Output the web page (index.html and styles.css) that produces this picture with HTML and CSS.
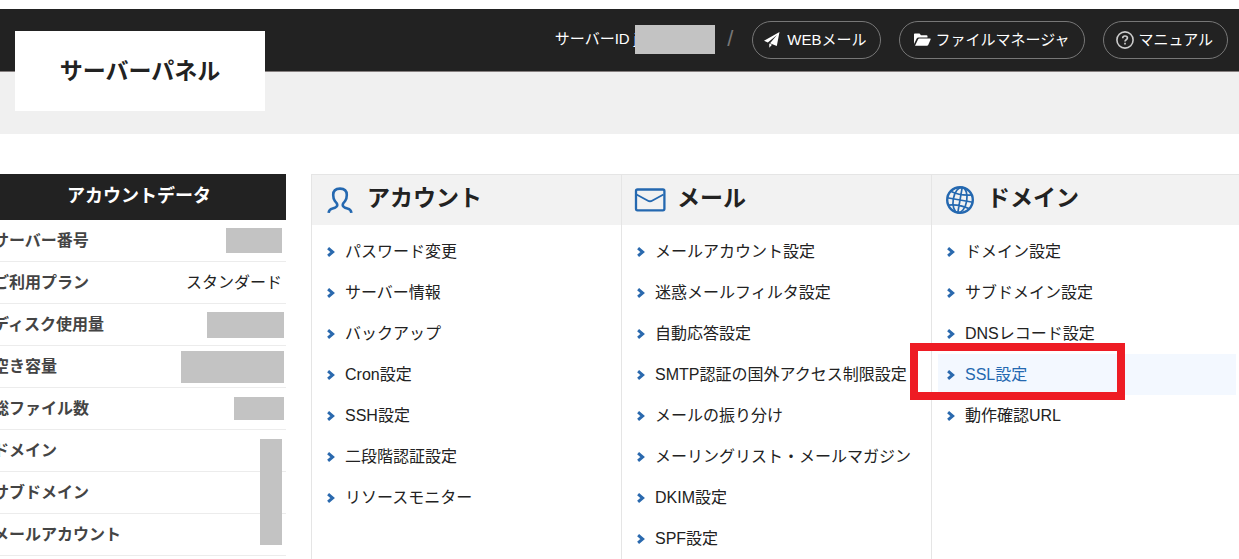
FILE: index.html
```html
<!DOCTYPE html>
<html lang="ja">
<head>
<meta charset="utf-8">
<title>サーバーパネル</title>
<link rel="stylesheet" href="styles.css">
</head>
<body>
<svg class="sprite" width="0" height="0" aria-hidden="true">
  <symbol id="chevron" viewBox="0 0 8 10"><path d="M1.1 1.2 L5.6 5 L1.1 8.8" fill="none" stroke="#2a69ae" stroke-width="3"/></symbol>
</svg>
<header class="header">
  <h1 class="logo">サーバーパネル</h1>
  <nav class="nav">
    <span class="server">サーバーID j<span class="mask mask-id"></span></span>
    <span class="slash">/</span>
    <a class="pill pill-mail" href="#">
      <svg width="16" height="16" viewBox="0 0 16 16"><path d="M15.5 0 L0 8.8 L3.8 10.5 L13 3 L6 11.2 L12.8 14 Z M5.3 11.6 L5.3 15.7 L8 12.8 Z" fill="#fff"/></svg>
      WEBメール</a>
    <a class="pill pill-file" href="#">
      <svg width="17" height="14" viewBox="0 0 17 14"><path d="M0 11 V1.2 Q0 0.5 .8 .5 H5.5 L7 2.2 H12.5 Q13.5 2.2 13.5 3.2 V4.4 H4.6 Q3.3 4.4 2.7 5.5 Z M1 12.8 L4 6.4 Q4.4 5.6 5.3 5.6 H16 Q17 5.6 16.6 6.5 L14.2 12 Q13.8 12.8 13 12.8 Z" fill="#fff"/></svg>
      ファイルマネージャ</a>
    <a class="pill pill-help" href="#">
      <svg width="18" height="18" viewBox="0 0 18 18" fill="none" stroke="#ccc"><circle cx="9" cy="9" r="8.1" stroke-width="1.6"/><path d="M6.7 7.2 Q6.7 5 9 5 Q11.4 5 11.4 7 Q11.4 8 10.2 8.8 Q9 9.6 9 10.6 M9 11.8 V13.4" stroke-width="1.7"/></svg>
      マニュアル</a>
  </nav>
</header>
<div class="subbar"></div>
<main class="main">
  <table class="side">
    <thead><tr><th class="side-title" colspan="2" scope="colgroup">アカウントデータ</th></tr></thead>
    <tbody>
      <tr><th scope="row">サーバー番号</th><td><span class="mask mask-number"></span></td></tr>
      <tr><th scope="row">ご利用プラン</th><td>スタンダード</td></tr>
      <tr><th scope="row">ディスク使用量</th><td class="wide"><span class="mask mask-disk"></span></td></tr>
      <tr><th scope="row">空き容量</th><td class="wide"><span class="mask mask-free"></span></td></tr>
      <tr><th scope="row">総ファイル数</th><td class="wide"><span class="mask mask-files"></span></td></tr>
      <tr><th scope="row">ドメイン</th><td class="counts"><span class="mask mask-counts"></span></td></tr>
      <tr><th scope="row">サブドメイン</th><td></td></tr>
      <tr><th scope="row">メールアカウント</th><td></td></tr>
    </tbody>
  </table>
  <div class="menus">
    <section class="menu">
      <h2>
        <svg width="32" height="32" viewBox="0 0 32 32" fill="none" stroke="#2468b0" stroke-width="2.6"><path d="M4.6 28.8 Q5 25.5 8.5 24.6 Q13.3 23.2 13.3 21 Q13.3 19.5 11 17.2 Q9.2 15 9.2 11 Q9.2 4.6 16 4.6 Q22.8 4.6 22.8 11 Q22.8 15 21 17.2 Q18.7 19.5 18.7 21 Q18.7 23.2 23.5 24.6 Q27 25.5 27.4 28.8"/></svg>
        <span>アカウント</span></h2>
      <ul>
        <li><a href="#"><svg class="arrow"><use href="#chevron"/></svg>パスワード変更</a></li>
        <li><a href="#"><svg class="arrow"><use href="#chevron"/></svg>サーバー情報</a></li>
        <li><a href="#"><svg class="arrow"><use href="#chevron"/></svg>バックアップ</a></li>
        <li><a href="#"><svg class="arrow"><use href="#chevron"/></svg>Cron設定</a></li>
        <li><a href="#"><svg class="arrow"><use href="#chevron"/></svg>SSH設定</a></li>
        <li><a href="#"><svg class="arrow"><use href="#chevron"/></svg>二段階認証設定</a></li>
        <li><a href="#"><svg class="arrow"><use href="#chevron"/></svg>リソースモニター</a></li>
      </ul>
    </section>
    <section class="menu">
      <h2>
        <svg width="32" height="32" viewBox="0 0 32 32" fill="none" stroke="#2468b0"><rect x="2" y="5.5" width="28.4" height="20.8" rx="1.5" stroke-width="2.3"/><path d="M2.5 10.5 L13.5 16.5 Q16 18 18.5 16.5 L29.5 10.5" stroke-width="1.8"/></svg>
        <span>メール</span></h2>
      <ul>
        <li><a href="#"><svg class="arrow"><use href="#chevron"/></svg>メールアカウント設定</a></li>
        <li><a href="#"><svg class="arrow"><use href="#chevron"/></svg>迷惑メールフィルタ設定</a></li>
        <li><a href="#"><svg class="arrow"><use href="#chevron"/></svg>自動応答設定</a></li>
        <li><a href="#"><svg class="arrow"><use href="#chevron"/></svg>SMTP認証の国外アクセス制限設定</a></li>
        <li><a href="#"><svg class="arrow"><use href="#chevron"/></svg>メールの振り分け</a></li>
        <li><a href="#"><svg class="arrow"><use href="#chevron"/></svg>メーリングリスト・メールマガジン</a></li>
        <li><a href="#"><svg class="arrow"><use href="#chevron"/></svg>DKIM設定</a></li>
        <li><a href="#"><svg class="arrow"><use href="#chevron"/></svg>SPF設定</a></li>
      </ul>
    </section>
    <section class="menu">
      <h2>
        <svg width="32" height="32" viewBox="0 0 32 32" fill="none" stroke="#2468b0"><circle cx="16" cy="16" r="12.8" stroke-width="2.4"/><g stroke-width="1.7" transform="rotate(10 16 16)"><ellipse cx="16" cy="16" rx="6.8" ry="12.8"/><path d="M16 3 V29 M3 16 H29 M5.3 9 Q16 12 26.7 9 M5.3 23 Q16 20 26.7 23"/></g></svg>
        <span>ドメイン</span></h2>
      <ul>
        <li><a href="#"><svg class="arrow"><use href="#chevron"/></svg>ドメイン設定</a></li>
        <li><a href="#"><svg class="arrow"><use href="#chevron"/></svg>サブドメイン設定</a></li>
        <li><a href="#"><svg class="arrow"><use href="#chevron"/></svg>DNSレコード設定</a></li>
        <li class="active"><a href="#"><svg class="arrow"><use href="#chevron"/></svg>SSL設定</a><span class="callout"></span></li>
        <li><a href="#"><svg class="arrow"><use href="#chevron"/></svg>動作確認URL</a></li>
      </ul>
    </section>
  </div>
</main>
</body>
</html>
```
FILE: styles.css
```css
* { box-sizing: border-box; }
body {
  margin: 0;
  padding-top: 9px;
  background: #fff;
  color: #222;
  font: 16px/24px "Liberation Sans", "Noto Sans CJK JP", sans-serif;
  overflow: hidden;
}
.sprite { position: absolute; }
a { color: inherit; text-decoration: none; }
.mask { display: inline-block; background: #c3c3c3; vertical-align: middle; }

.header {
  position: relative;
  display: flex;
  justify-content: flex-end;
  height: 63px;
  padding: 12px 11px 0 15px;
  background: #222;
  border-bottom: 1px solid #857f7f;
}
.logo {
  position: absolute;
  left: 15px;
  top: 22px;
  width: 250px;
  margin: 0;
  background: #fff;
  color: #222;
  font-size: 23px;
  line-height: 80px;
  text-align: center;
}
.nav { display: flex; align-items: flex-start; color: #fff; font-size: 15px; white-space: nowrap; }
.server { display: flex; align-items: center; height: 36px; white-space: pre; }
.mask-id { width: 80px; height: 29px; margin-left: -2px; }
.slash { margin: 0 19px 0 12px; color: #777; font-size: 22px; line-height: 36px; }
.pill {
  display: flex;
  align-items: center;
  height: 38px;
  border: 1px solid #777;
  border-radius: 19px;
}
.pill + .pill { margin-left: 18px; }
.pill-mail { gap: 7px; padding: 0 14px 0 11px; }
.pill-file { gap: 4px; padding: 0 15px 0 14px; }
.pill-help { gap: 4px; padding: 0 14px 0 12px; }
.subbar { height: 62px; background: #f0f0f0; }

.main {
  display: flex;
  align-items: flex-start;
  gap: 25px;
  margin: 40px -2px 0 -14px;
}
.side { flex: 0 0 300px; width: 300px; border-collapse: separate; border-spacing: 0; }
.side th, .side td { height: 42px; padding: 0 4px 0 7px; border-bottom: 1px solid #ececec; }
.side th { color: #444; text-align: left; white-space: nowrap; }
.side td { text-align: right; line-height: 20px; }
.side td.wide { padding-right: 2px; }
.side .side-title {
  height: 46px;
  padding: 0 0 2px 6px;
  border: 0;
  background: #222;
  color: #fff;
  font-size: 18px;
  text-align: center;
}
.side .counts { position: relative; }
.mask-number { width: 56px; height: 25px; }
.mask-disk { width: 77px; height: 26px; }
.mask-free { width: 103px; height: 32px; }
.mask-files { width: 50px; height: 23px; }
.mask-counts { position: absolute; right: 4px; top: 9px; width: 22px; height: 106px; }

.menus {
  flex: 1;
  display: grid;
  grid-template-columns: repeat(3, minmax(0, 1fr));
  border-top: 1px solid #e5e5e5;
}
.menu { min-height: 400px; border-left: 1px solid #e5e5e5; }
.menu h2 {
  display: flex;
  align-items: center;
  gap: 11px;
  height: 50px;
  margin: 0;
  padding-left: 12px;
  background: #f2f2f2;
  font-size: 23px;
}
.menu h2 span { padding-bottom: 4px; }
.menu ul { margin: 6px 0 0; padding: 0 5px 0 6px; list-style: none; }
.menu li { position: relative; height: 41px; }
.menu li a { display: flex; align-items: center; gap: 10px; height: 41px; padding-left: 9px; white-space: nowrap; }
.arrow { width: 8px; height: 10px; }
.active { background: #f3f8ff; color: #2468b0; }
.callout {
  position: absolute;
  left: -28px;
  top: -11px;
  width: 215px;
  height: 57px;
  border: 8px solid #ee1c24;
}
```
